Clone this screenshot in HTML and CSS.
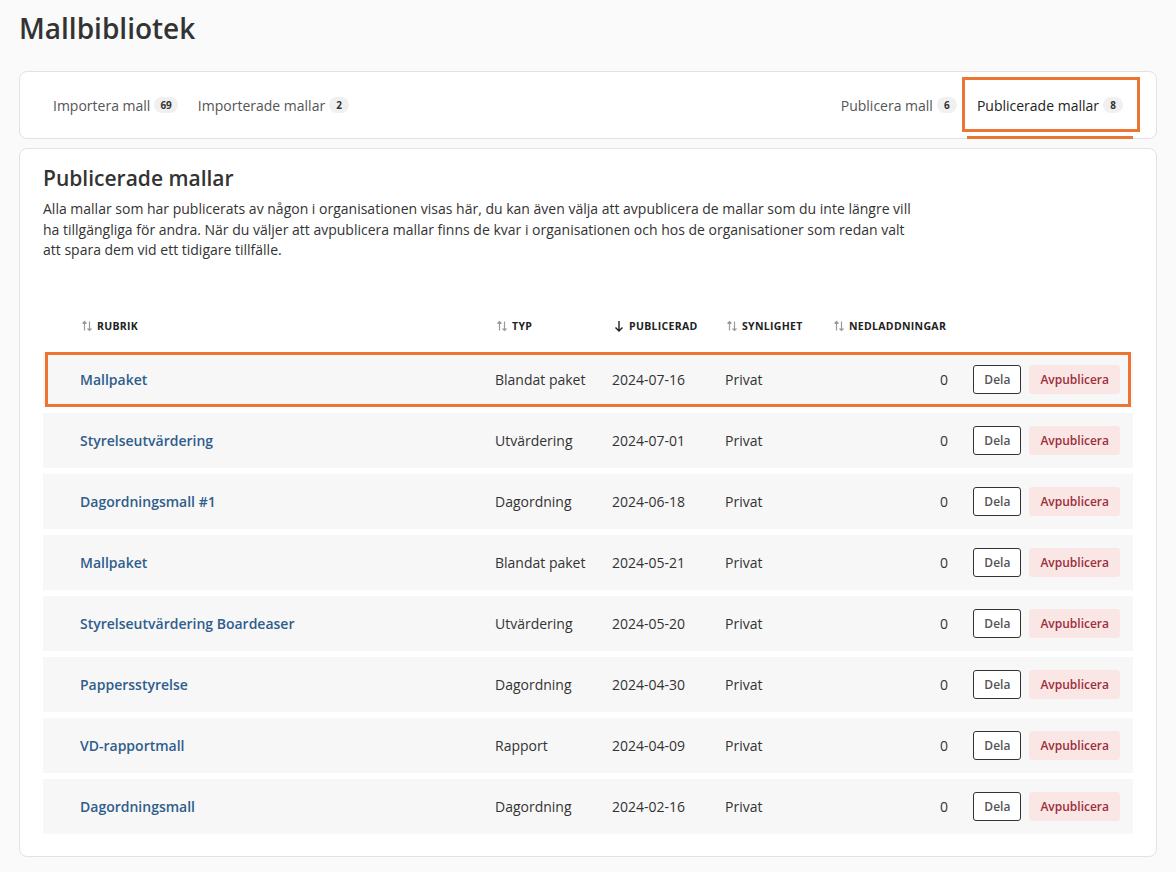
FILE: index.html
```html
<!DOCTYPE html>
<html lang="sv">
<head>
  <meta charset="UTF-8" />
  <meta name="viewport" content="width=device-width, initial-scale=1" />
  <title>Mallbibliotek</title>
  <link rel="stylesheet" href="styles.css">
</head>
<body>
  <h1 class="page-title">Mallbibliotek</h1>

  <nav class="tabs">
    <div class="tab-group">
      <a class="tab">Importera mall <span class="badge">69</span></a>
      <a class="tab">Importerade mallar <span class="badge">2</span></a>
    </div>
    <div class="tab-group">
      <a class="tab">Publicera mall <span class="badge">6</span></a>
      <a class="tab active">Publicerade mallar <span class="badge">8</span></a>
    </div>
  </nav>

  <section class="card">
    <h2>Publicerade mallar</h2>
    <p class="intro">Alla mallar som har publicerats av någon i organisationen visas här, du kan även välja att avpublicera de mallar som du inte längre vill ha tillgängliga för andra. När du väljer att avpublicera mallar finns de kvar i organisationen och hos de organisationer som redan valt att spara dem vid ett tidigare tillfälle.</p>

    <div class="list">
      <div class="list-head">
        <div class="th"><svg class="sort" viewBox="0 0 12 12"><path d="M3.5 10.5V1.5M1.5 3.5l2-2 2 2M8.5 1.5v9M6.5 8.5l2 2 2-2"/></svg>Rubrik</div>
        <div class="th"><svg class="sort" viewBox="0 0 12 12"><path d="M3.5 10.5V1.5M1.5 3.5l2-2 2 2M8.5 1.5v9M6.5 8.5l2 2 2-2"/></svg>Typ</div>
        <div class="th"><svg class="sort on" viewBox="0 0 12 12"><path d="M6 1v10M2.5 7.5L6 11l3.5-3.5"/></svg>Publicerad</div>
        <div class="th"><svg class="sort" viewBox="0 0 12 12"><path d="M3.5 10.5V1.5M1.5 3.5l2-2 2 2M8.5 1.5v9M6.5 8.5l2 2 2-2"/></svg>Synlighet</div>
        <div class="th"><svg class="sort" viewBox="0 0 12 12"><path d="M3.5 10.5V1.5M1.5 3.5l2-2 2 2M8.5 1.5v9M6.5 8.5l2 2 2-2"/></svg>Nedladdningar</div>
        <div class="th"></div>
      </div>

      <div class="row marked">
        <a class="name">Mallpaket</a><span>Blandat paket</span><span>2024-07-16</span><span>Privat</span><span class="num">0</span>
        <div class="actions"><button class="btn-share">Dela</button><button class="btn-unpub">Avpublicera</button></div>
      </div>
      <div class="row">
        <a class="name">Styrelseutvärdering</a><span>Utvärdering</span><span>2024-07-01</span><span>Privat</span><span class="num">0</span>
        <div class="actions"><button class="btn-share">Dela</button><button class="btn-unpub">Avpublicera</button></div>
      </div>
      <div class="row">
        <a class="name">Dagordningsmall #1</a><span>Dagordning</span><span>2024-06-18</span><span>Privat</span><span class="num">0</span>
        <div class="actions"><button class="btn-share">Dela</button><button class="btn-unpub">Avpublicera</button></div>
      </div>
      <div class="row">
        <a class="name">Mallpaket</a><span>Blandat paket</span><span>2024-05-21</span><span>Privat</span><span class="num">0</span>
        <div class="actions"><button class="btn-share">Dela</button><button class="btn-unpub">Avpublicera</button></div>
      </div>
      <div class="row">
        <a class="name">Styrelseutvärdering Boardeaser</a><span>Utvärdering</span><span>2024-05-20</span><span>Privat</span><span class="num">0</span>
        <div class="actions"><button class="btn-share">Dela</button><button class="btn-unpub">Avpublicera</button></div>
      </div>
      <div class="row">
        <a class="name">Pappersstyrelse</a><span>Dagordning</span><span>2024-04-30</span><span>Privat</span><span class="num">0</span>
        <div class="actions"><button class="btn-share">Dela</button><button class="btn-unpub">Avpublicera</button></div>
      </div>
      <div class="row">
        <a class="name">VD-rapportmall</a><span>Rapport</span><span>2024-04-09</span><span>Privat</span><span class="num">0</span>
        <div class="actions"><button class="btn-share">Dela</button><button class="btn-unpub">Avpublicera</button></div>
      </div>
      <div class="row">
        <a class="name">Dagordningsmall</a><span>Dagordning</span><span>2024-02-16</span><span>Privat</span><span class="num">0</span>
        <div class="actions"><button class="btn-share">Dela</button><button class="btn-unpub">Avpublicera</button></div>
      </div>
    </div>
  </section>
</body>
</html>
```

FILE: styles.css
```css
:root {
  --accent: #ec7532;
  --link: #2f5d8c;
  --text: #333;
  --border: #e2e2e2;
}

body {
  margin: 0;
  padding: 11px 19px 0;
  background: #fafafa;
  color: var(--text);
  font-family: "Open Sans", Lato, sans-serif;
}

.page-title {
  margin: 0 0 26px;
  font-size: 28px;
  line-height: 34px;
  font-weight: 600;
  color: #333;
}

/* tabs */
.tabs {
  display: flex;
  justify-content: space-between;
  height: 66px;
  padding: 0 23px;
  background: #fff;
  border: 1px solid var(--border);
  border-radius: 8px;
}

.tab-group {
  display: flex;
}

.tab {
  position: relative;
  display: flex;
  align-items: center;
  gap: 4px;
  padding: 0 10px;
  font-size: 14px;
  color: #555;
}

.tab.active {
  color: #222;
}

.tab.active::after {
  content: "";
  position: absolute;
  left: 0;
  right: 0;
  bottom: -1px;
  height: 3px;
  background: var(--accent);
}

.tab.active::before {
  content: "";
  position: absolute;
  top: 5px;
  left: -5px;
  right: -7px;
  height: 49px;
  border: 3px solid var(--accent);
}

.badge {
  display: inline-block;
  min-width: 8px;
  padding: 2px 6px;
  border-radius: 8px;
  background: #f0f0f0;
  font-size: 10px;
  font-weight: 700;
  line-height: 12px;
  text-align: center;
  color: #333;
}

/* content card */
.card {
  margin-top: 9px;
  padding: 15px 23px 22px;
  background: #fff;
  border: 1px solid var(--border);
  border-radius: 8px;
}

.card h2 {
  margin: 0 0 7px;
  font-size: 21px;
  line-height: 28px;
  font-weight: 600;
  color: #333;
}

.intro {
  max-width: 880px;
  margin: 0;
  font-size: 14px;
  line-height: 20.5px;
  color: #333;
}

.list {
  margin-top: 45px;
  display: flex;
  flex-direction: column;
  gap: 6px;
}

.list-head,
.row {
  display: grid;
  grid-template-columns: 415px 117px 113px 107px 116px 1fr;
  align-items: center;
  padding: 0 13px 0 37px;
}

.list-head {
  height: 40px;
}

.th {
  display: flex;
  align-items: center;
  gap: 4px;
  padding-left: 1px;
  font-size: 10.5px;
  font-weight: 700;
  letter-spacing: 0.3px;
  text-transform: uppercase;
  color: #222;
}

.sort {
  width: 12px;
  height: 12px;
  fill: none;
  stroke: #9a9a9a;
  stroke-width: 1.2;
}

.sort.on {
  stroke: #222;
  stroke-width: 1.4;
}

.row {
  position: relative;
  height: 55px;
  background: #f7f7f7;
  font-size: 14px;
  color: #333;
}

.row.marked::after {
  content: "";
  position: absolute;
  top: 0;
  bottom: 0;
  left: 2px;
  right: 2px;
  border: 3px solid var(--accent);
  pointer-events: none;
}

.name {
  font-weight: 600;
  color: var(--link);
}

.num {
  text-align: right;
}

.actions {
  display: flex;
  justify-content: flex-end;
  gap: 8px;
}

.actions button {
  height: 29px;
  padding: 0 10px;
  font-family: inherit;
  font-size: 12px;
  font-weight: 600;
  border-radius: 3px;
}

.btn-share {
  background: #fff;
  border: 1px solid #333;
  color: #555;
}

.btn-unpub {
  background: #fbe6e6;
  border: 1px solid #fbe6e6;
  color: #9b2f3a;
}
```
